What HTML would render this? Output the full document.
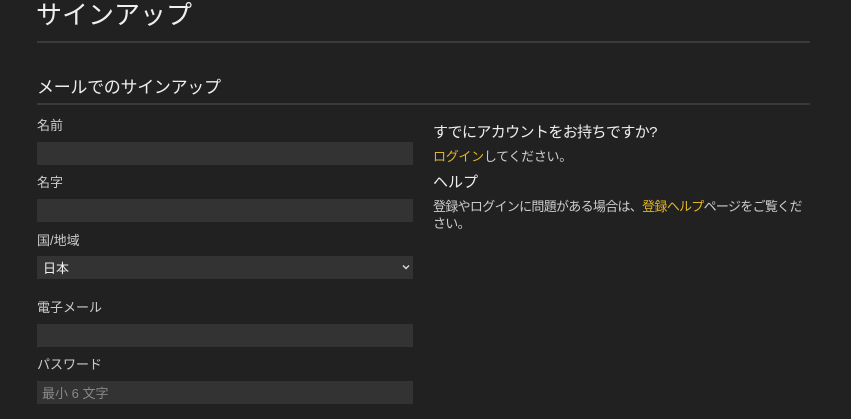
<!DOCTYPE html>
<html><head><meta charset="utf-8"><style>
html,body{margin:0;padding:0;background:#212121;width:851px;height:419px;overflow:hidden;font-family:"Liberation Sans","Noto Sans CJK JP",sans-serif;color:#ddd}
.a{position:absolute;white-space:nowrap}
.line{position:absolute;left:37px;width:773px;height:1px;background:#3a3a3a}
.in{position:absolute;left:37px;width:376px;height:23px;background:#333}
.lab{position:absolute;left:37px;font-size:13px;color:#ccc;line-height:16px}
.y{color:#e0b526}
</style></head><body>
<div class="a" style="left:36px;top:-1px;font-size:26px;line-height:32px;color:#eee">サインアップ</div>
<div class="line" style="top:41px;height:2px"></div>
<div class="a" style="left:37px;top:78px;font-size:17px;line-height:20px;color:#eee;letter-spacing:-0.3px">メールでのサインアップ</div>
<div class="line" style="top:103px;height:2px"></div>

<div class="lab" style="top:118px">名前</div>
<div class="in" style="top:142px"></div>
<div class="lab" style="top:175px">名字</div>
<div class="in" style="top:199px"></div>
<div class="lab" style="top:233px">国/地域</div>
<div class="in" style="top:256px"></div>
<div class="a" style="left:43px;top:261px;font-size:13px;line-height:16px;color:#eee">日本</div>
<svg class="a" style="left:402px;top:264px" width="8" height="6" viewBox="0 0 8 6"><path d="M1 1.5L4 4.5L7 1.5" stroke="#ddd" stroke-width="1.4" fill="none"/></svg>
<div class="lab" style="top:300px">電子メール</div>
<div class="in" style="top:324px"></div>
<div class="lab" style="top:357px">パスワード</div>
<div class="in" style="top:381px"></div>
<div class="a" style="left:42px;top:386px;font-size:13px;line-height:16px;color:#888">最小 6 文字</div>

<div class="a" style="left:433px;top:124px;font-size:15px;line-height:18px;color:#eee;letter-spacing:-0.6px">すでにアカウントをお持ちですか?</div>
<div class="a" style="left:433px;top:149px;font-size:13px;line-height:16px;color:#ccc;letter-spacing:-0.3px"><span class="y">ログイン</span>してください。</div>
<div class="a" style="left:433px;top:174px;font-size:15px;line-height:18px;color:#eee">ヘルプ</div>
<div class="a" style="left:433px;top:198px;font-size:13px;line-height:17px;color:#ccc;letter-spacing:-0.7px">登録やログインに問題がある場合は、<span class="y">登録ヘルプ</span>ページをご覧くだ<br>さい。</div>
</body></html>
